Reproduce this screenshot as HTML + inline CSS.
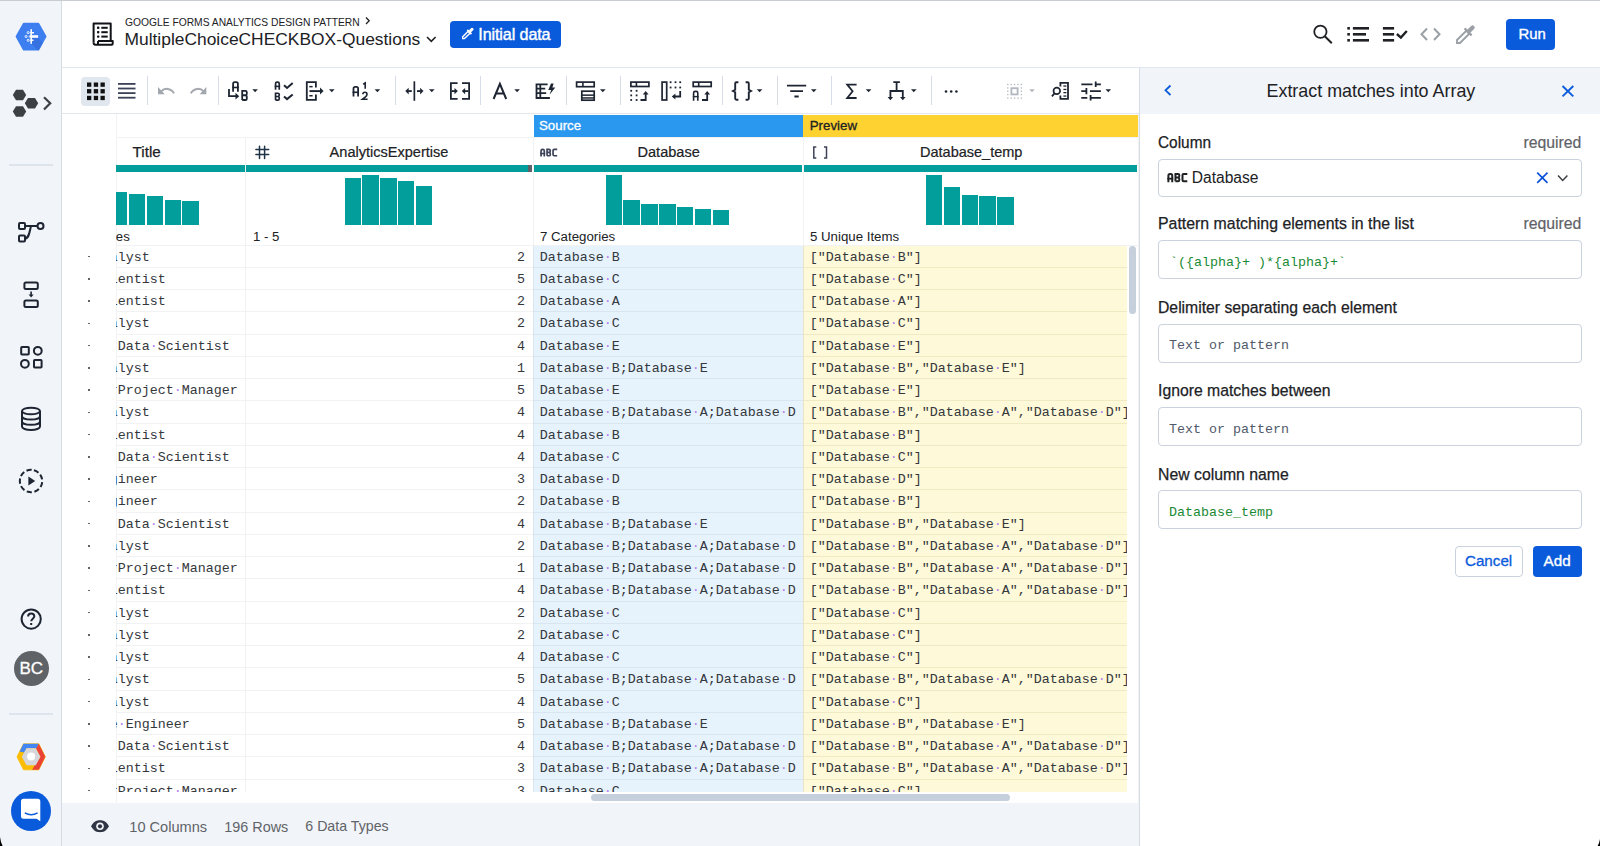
<!DOCTYPE html>
<html><head><meta charset="utf-8">
<style>
*{box-sizing:border-box;margin:0;padding:0}
html,body{width:1600px;height:846px;overflow:hidden;background:#fff;font-family:"Liberation Sans",sans-serif;color:#202124;position:relative}
.abs{position:absolute}
.t{position:absolute;white-space:pre}
svg.ov{position:absolute;left:0;top:0;width:1600px;height:846px;overflow:visible;z-index:20}
.row{position:absolute;left:0;width:1077px;height:22.25px}
.row>div{position:absolute;top:0;height:22.25px;overflow:hidden;white-space:pre;font-family:"Liberation Mono",monospace;font-size:13.33px;line-height:23.7px;color:#34373c}
.row .rn{left:0;width:54px}
b.dot{position:absolute;left:26.3px;top:10.4px;width:1.6px;height:1.6px;background:#5f6368}
.row .c1{left:54px;width:129px;border-bottom:1px solid #f0f2f4}
.row .c2{left:183px;width:288px;text-align:right;padding-right:8px;border-bottom:1px solid #f0f2f4;border-left:1px solid #f0f2f4}
.row .c3{left:471px;width:270px;background:#e6f3fd;padding-left:5.8px;border-bottom:1px solid #d9e6f0;border-left:1px solid #d9e6f0}
.row .c4{left:741px;width:324px;background:#fef9d8;padding-left:5.8px;border-bottom:1px solid #efe9c4;border-left:1px solid #e8e4c8}
.ttl{position:absolute;left:-6.3px;top:0}
i.dt{font-style:normal;color:#b27af0}
.hist{position:absolute;background:#019e9c}
.inp{position:absolute;left:1158px;width:424px;height:39px;border:1px solid #c9d2dd;border-radius:4px;background:#fff}
</style></head><body>

<!-- ============ BACKGROUND BLOCKS ============ -->
<div class="abs" style="left:0;top:0;width:62px;height:846px;background:#f1f4f9"></div>
<div class="abs" style="left:61px;top:0;width:1px;height:846px;background:#d5dce6"></div>
<div class="abs" style="left:62px;top:67px;width:1538px;height:1px;background:#e3e8ee"></div>
<div class="abs" style="left:62px;top:113px;width:1077px;height:1px;background:#e3e8ee"></div>
<div class="abs" style="left:1140px;top:68px;width:460px;height:46px;background:#f1f4f9"></div>
<div class="abs" style="left:1139px;top:68px;width:1px;height:778px;background:#d5dce6"></div>
<div class="abs" style="left:62px;top:803px;width:1077px;height:43px;background:#f1f4f9"></div>
<div class="abs" style="left:0;top:0;width:1600px;height:1px;background:#c9ccd1"></div>

<!-- ============ HEADER TEXT ============ -->
<div class="t" style="left:124.50px;top:14.92px;font-family:'Liberation Sans',sans-serif;font-size:11.2px;line-height:14.0px;color:#202124;transform:scaleX(0.9185);transform-origin:0 0;">GOOGLE FORMS ANALYTICS DESIGN PATTERN</div>
<div class="t" style="left:124.50px;top:29.40px;font-family:'Liberation Sans',sans-serif;font-size:17.4px;line-height:21.75px;color:#202124;">MultipleChoiceCHECKBOX-Questions</div>
<div class="abs" style="left:450px;top:21px;width:111px;height:26.5px;background:#0a5bdb;border-radius:4px"></div>
<div class="t" style="left:478.30px;top:24.16px;font-family:'Liberation Sans',sans-serif;font-size:16.1px;line-height:20.12px;color:#fff;-webkit-text-stroke:0.4px #fff;letter-spacing:-0.1px;">Initial data</div>
<div class="abs" style="left:1506px;top:19.3px;width:49.2px;height:30.5px;background:#0a5bdb;border-radius:4px"></div>
<div class="t" style="left:1518.50px;top:25.13px;font-family:'Liberation Sans',sans-serif;font-size:14.9px;line-height:18.62px;color:#fff;-webkit-text-stroke:0.35px #fff;">Run</div>

<!-- ============ TOOLBAR ============ -->
<div class="abs" style="left:81px;top:77px;width:29px;height:29px;border-radius:4px;background:#e1e7ef"></div>
<div class="abs" style="left:147px;top:76px;width:1px;height:29px;background:#d6dde6"></div>
<div class="abs" style="left:218px;top:76px;width:1px;height:29px;background:#d6dde6"></div>
<div class="abs" style="left:395px;top:76px;width:1px;height:29px;background:#d6dde6"></div>
<div class="abs" style="left:480px;top:76px;width:1px;height:29px;background:#d6dde6"></div>
<div class="abs" style="left:566px;top:76px;width:1px;height:29px;background:#d6dde6"></div>
<div class="abs" style="left:620px;top:76px;width:1px;height:29px;background:#d6dde6"></div>
<div class="abs" style="left:722px;top:76px;width:1px;height:29px;background:#d6dde6"></div>
<div class="abs" style="left:777px;top:76px;width:1px;height:29px;background:#d6dde6"></div>
<div class="abs" style="left:831px;top:76px;width:1px;height:29px;background:#d6dde6"></div>
<div class="abs" style="left:931px;top:76px;width:1px;height:29px;background:#d6dde6"></div>

<!-- ============ GRID ============ -->
<div class="abs" style="left:116px;top:114px;width:1px;height:689px;background:#f0f2f4"></div>
<div class="abs" style="left:116px;top:137px;width:1023px;height:1px;background:#f0f2f4"></div>
<div class="abs" style="left:533.5px;top:115px;width:269.5px;height:21.5px;background:#2b98f0"></div>
<div class="t" style="left:539.00px;top:118.08px;font-family:'Liberation Sans',sans-serif;font-size:13.3px;line-height:16.62px;color:#fff;-webkit-text-stroke:0.3px #fff;">Source</div>
<div class="abs" style="left:803px;top:115px;width:334.5px;height:21.5px;background:#fdd231"></div>
<div class="t" style="left:809.70px;top:118.08px;font-family:'Liberation Sans',sans-serif;font-size:13.3px;line-height:16.62px;color:#202124;-webkit-text-stroke:0.3px #202124;">Preview</div>
<div class="abs" style="left:245px;top:138px;width:1px;height:654px;background:#f0f2f4"></div>
<div class="abs" style="left:533px;top:138px;width:1px;height:654px;background:#f0f2f4"></div>
<div class="abs" style="left:803px;top:138px;width:1px;height:654px;background:#f0f2f4"></div>
<div class="t" style="left:132.60px;top:142.23px;font-family:'Liberation Sans',sans-serif;font-size:15.2px;line-height:19.0px;color:#202124;-webkit-text-stroke:0.25px #202124;">Title</div>
<div class="t" style="left:329.60px;top:142.86px;font-family:'Liberation Sans',sans-serif;font-size:14.55px;line-height:18.19px;color:#202124;-webkit-text-stroke:0.2px #202124;">AnalyticsExpertise</div>
<div class="t" style="left:637.50px;top:142.86px;font-family:'Liberation Sans',sans-serif;font-size:14.55px;line-height:18.19px;color:#202124;-webkit-text-stroke:0.2px #202124;">Database</div>
<div class="t" style="left:920.00px;top:142.92px;font-family:'Liberation Sans',sans-serif;font-size:14.5px;line-height:18.12px;color:#202124;-webkit-text-stroke:0.2px #202124;">Database_temp</div>
<div class="hist" style="left:116px;top:165px;width:128.5px;height:7px"></div>
<div class="hist" style="left:246px;top:165px;width:282px;height:7px"></div>
<div class="abs" style="left:528px;top:165px;width:4px;height:7px;background:#5f6368"></div>
<div class="hist" style="left:533.5px;top:165px;width:268.5px;height:7px"></div>
<div class="hist" style="left:804px;top:165px;width:332.5px;height:7px"></div>
<div class="abs" style="left:116px;top:114px;width:129px;height:131px;overflow:hidden"><div style="position:absolute;left:-116px;top:-114px;width:400px;height:300px"><div class="hist" style="left:111.00px;top:192.00px;width:16.4px;height:33.30px"></div><div class="hist" style="left:128.85px;top:193.60px;width:16.4px;height:31.70px"></div><div class="hist" style="left:146.70px;top:195.70px;width:16.4px;height:29.60px"></div><div class="hist" style="left:164.55px;top:200.00px;width:16.4px;height:25.30px"></div><div class="hist" style="left:182.40px;top:201.20px;width:16.4px;height:24.10px"></div></div></div><div class="hist" style="left:344.50px;top:178.00px;width:16.4px;height:47.30px"></div><div class="hist" style="left:362.35px;top:174.80px;width:16.4px;height:50.50px"></div><div class="hist" style="left:380.20px;top:178.00px;width:16.4px;height:47.30px"></div><div class="hist" style="left:398.05px;top:181.40px;width:16.4px;height:43.90px"></div><div class="hist" style="left:415.90px;top:185.70px;width:16.4px;height:39.60px"></div><div class="hist" style="left:605.60px;top:174.80px;width:16.4px;height:50.50px"></div><div class="hist" style="left:623.45px;top:200.00px;width:16.4px;height:25.30px"></div><div class="hist" style="left:641.30px;top:203.50px;width:16.4px;height:21.80px"></div><div class="hist" style="left:659.15px;top:203.50px;width:16.4px;height:21.80px"></div><div class="hist" style="left:677.00px;top:207.00px;width:16.4px;height:18.30px"></div><div class="hist" style="left:694.85px;top:209.00px;width:16.4px;height:16.30px"></div><div class="hist" style="left:712.70px;top:210.00px;width:16.4px;height:15.30px"></div><div class="hist" style="left:925.80px;top:175.00px;width:16.4px;height:50.30px"></div><div class="hist" style="left:943.65px;top:186.80px;width:16.4px;height:38.50px"></div><div class="hist" style="left:961.50px;top:194.60px;width:16.4px;height:30.70px"></div><div class="hist" style="left:979.35px;top:195.70px;width:16.4px;height:29.60px"></div><div class="hist" style="left:997.20px;top:196.70px;width:16.4px;height:28.60px"></div>
<div class="abs" style="left:116px;top:225px;width:129px;height:20px;overflow:hidden"><div style="position:absolute;left:-116px;top:-225px"><div class="t" style="left:115.80px;top:228.98px;font-family:'Liberation Sans',sans-serif;font-size:13.2px;line-height:16.5px;color:#202124;">es</div></div></div>
<div class="t" style="left:253.00px;top:228.98px;font-family:'Liberation Sans',sans-serif;font-size:13.2px;line-height:16.5px;color:#202124;">1 - 5</div>
<div class="t" style="left:540.00px;top:228.93px;font-family:'Liberation Sans',sans-serif;font-size:13.25px;line-height:16.56px;color:#202124;">7 Categories</div>
<div class="t" style="left:810.00px;top:228.93px;font-family:'Liberation Sans',sans-serif;font-size:13.25px;line-height:16.56px;color:#202124;">5 Unique Items</div>
<div class="abs" style="left:116px;top:245px;width:1023px;height:1px;background:#f0f2f4"></div>
<div class="abs" style="left:62px;top:245.5px;width:1077px;height:546.5px;overflow:hidden">
<div class="row" style="top:0.00px"><div class="rn"><b class="dot"></b></div><div class="c1"><span class="ttl">alyst</span></div><div class="c2">2</div><div class="c3">Database<i class="dt">·</i>B</div><div class="c4">[&quot;Database<i class="dt">·</i>B&quot;]</div></div>
<div class="row" style="top:22.25px"><div class="rn"><b class="dot"></b></div><div class="c1"><span class="ttl">ientist</span></div><div class="c2">5</div><div class="c3">Database<i class="dt">·</i>C</div><div class="c4">[&quot;Database<i class="dt">·</i>C&quot;]</div></div>
<div class="row" style="top:44.50px"><div class="rn"><b class="dot"></b></div><div class="c1"><span class="ttl">ientist</span></div><div class="c2">2</div><div class="c3">Database<i class="dt">·</i>A</div><div class="c4">[&quot;Database<i class="dt">·</i>A&quot;]</div></div>
<div class="row" style="top:66.75px"><div class="rn"><b class="dot"></b></div><div class="c1"><span class="ttl">alyst</span></div><div class="c2">2</div><div class="c3">Database<i class="dt">·</i>C</div><div class="c4">[&quot;Database<i class="dt">·</i>C&quot;]</div></div>
<div class="row" style="top:89.00px"><div class="rn"><b class="dot"></b></div><div class="c1"><span class="ttl"><i class="dt">·</i>Data<i class="dt">·</i>Scientist</span></div><div class="c2">4</div><div class="c3">Database<i class="dt">·</i>E</div><div class="c4">[&quot;Database<i class="dt">·</i>E&quot;]</div></div>
<div class="row" style="top:111.25px"><div class="rn"><b class="dot"></b></div><div class="c1"><span class="ttl">alyst</span></div><div class="c2">1</div><div class="c3">Database<i class="dt">·</i>B;Database<i class="dt">·</i>E</div><div class="c4">[&quot;Database<i class="dt">·</i>B&quot;,&quot;Database<i class="dt">·</i>E&quot;]</div></div>
<div class="row" style="top:133.50px"><div class="rn"><b class="dot"></b></div><div class="c1"><span class="ttl">rProject<i class="dt">·</i>Manager</span></div><div class="c2">5</div><div class="c3">Database<i class="dt">·</i>E</div><div class="c4">[&quot;Database<i class="dt">·</i>E&quot;]</div></div>
<div class="row" style="top:155.75px"><div class="rn"><b class="dot"></b></div><div class="c1"><span class="ttl">alyst</span></div><div class="c2">4</div><div class="c3">Database<i class="dt">·</i>B;Database<i class="dt">·</i>A;Database<i class="dt">·</i>D</div><div class="c4">[&quot;Database<i class="dt">·</i>B&quot;,&quot;Database<i class="dt">·</i>A&quot;,&quot;Database<i class="dt">·</i>D&quot;]</div></div>
<div class="row" style="top:178.00px"><div class="rn"><b class="dot"></b></div><div class="c1"><span class="ttl">ientist</span></div><div class="c2">4</div><div class="c3">Database<i class="dt">·</i>B</div><div class="c4">[&quot;Database<i class="dt">·</i>B&quot;]</div></div>
<div class="row" style="top:200.25px"><div class="rn"><b class="dot"></b></div><div class="c1"><span class="ttl"><i class="dt">·</i>Data<i class="dt">·</i>Scientist</span></div><div class="c2">4</div><div class="c3">Database<i class="dt">·</i>C</div><div class="c4">[&quot;Database<i class="dt">·</i>C&quot;]</div></div>
<div class="row" style="top:222.50px"><div class="rn"><b class="dot"></b></div><div class="c1"><span class="ttl">gineer</span></div><div class="c2">3</div><div class="c3">Database<i class="dt">·</i>D</div><div class="c4">[&quot;Database<i class="dt">·</i>D&quot;]</div></div>
<div class="row" style="top:244.75px"><div class="rn"><b class="dot"></b></div><div class="c1"><span class="ttl">gineer</span></div><div class="c2">2</div><div class="c3">Database<i class="dt">·</i>B</div><div class="c4">[&quot;Database<i class="dt">·</i>B&quot;]</div></div>
<div class="row" style="top:267.00px"><div class="rn"><b class="dot"></b></div><div class="c1"><span class="ttl"><i class="dt">·</i>Data<i class="dt">·</i>Scientist</span></div><div class="c2">4</div><div class="c3">Database<i class="dt">·</i>B;Database<i class="dt">·</i>E</div><div class="c4">[&quot;Database<i class="dt">·</i>B&quot;,&quot;Database<i class="dt">·</i>E&quot;]</div></div>
<div class="row" style="top:289.25px"><div class="rn"><b class="dot"></b></div><div class="c1"><span class="ttl">alyst</span></div><div class="c2">2</div><div class="c3">Database<i class="dt">·</i>B;Database<i class="dt">·</i>A;Database<i class="dt">·</i>D</div><div class="c4">[&quot;Database<i class="dt">·</i>B&quot;,&quot;Database<i class="dt">·</i>A&quot;,&quot;Database<i class="dt">·</i>D&quot;]</div></div>
<div class="row" style="top:311.50px"><div class="rn"><b class="dot"></b></div><div class="c1"><span class="ttl">rProject<i class="dt">·</i>Manager</span></div><div class="c2">1</div><div class="c3">Database<i class="dt">·</i>B;Database<i class="dt">·</i>A;Database<i class="dt">·</i>D</div><div class="c4">[&quot;Database<i class="dt">·</i>B&quot;,&quot;Database<i class="dt">·</i>A&quot;,&quot;Database<i class="dt">·</i>D&quot;]</div></div>
<div class="row" style="top:333.75px"><div class="rn"><b class="dot"></b></div><div class="c1"><span class="ttl">ientist</span></div><div class="c2">4</div><div class="c3">Database<i class="dt">·</i>B;Database<i class="dt">·</i>A;Database<i class="dt">·</i>D</div><div class="c4">[&quot;Database<i class="dt">·</i>B&quot;,&quot;Database<i class="dt">·</i>A&quot;,&quot;Database<i class="dt">·</i>D&quot;]</div></div>
<div class="row" style="top:356.00px"><div class="rn"><b class="dot"></b></div><div class="c1"><span class="ttl">alyst</span></div><div class="c2">2</div><div class="c3">Database<i class="dt">·</i>C</div><div class="c4">[&quot;Database<i class="dt">·</i>C&quot;]</div></div>
<div class="row" style="top:378.25px"><div class="rn"><b class="dot"></b></div><div class="c1"><span class="ttl">alyst</span></div><div class="c2">2</div><div class="c3">Database<i class="dt">·</i>C</div><div class="c4">[&quot;Database<i class="dt">·</i>C&quot;]</div></div>
<div class="row" style="top:400.50px"><div class="rn"><b class="dot"></b></div><div class="c1"><span class="ttl">alyst</span></div><div class="c2">4</div><div class="c3">Database<i class="dt">·</i>C</div><div class="c4">[&quot;Database<i class="dt">·</i>C&quot;]</div></div>
<div class="row" style="top:422.75px"><div class="rn"><b class="dot"></b></div><div class="c1"><span class="ttl">alyst</span></div><div class="c2">5</div><div class="c3">Database<i class="dt">·</i>B;Database<i class="dt">·</i>A;Database<i class="dt">·</i>D</div><div class="c4">[&quot;Database<i class="dt">·</i>B&quot;,&quot;Database<i class="dt">·</i>A&quot;,&quot;Database<i class="dt">·</i>D&quot;]</div></div>
<div class="row" style="top:445.00px"><div class="rn"><b class="dot"></b></div><div class="c1"><span class="ttl">alyst</span></div><div class="c2">4</div><div class="c3">Database<i class="dt">·</i>C</div><div class="c4">[&quot;Database<i class="dt">·</i>C&quot;]</div></div>
<div class="row" style="top:467.25px"><div class="rn"><b class="dot"></b></div><div class="c1"><span class="ttl">e<i class="dt">·</i>Engineer</span></div><div class="c2">5</div><div class="c3">Database<i class="dt">·</i>B;Database<i class="dt">·</i>E</div><div class="c4">[&quot;Database<i class="dt">·</i>B&quot;,&quot;Database<i class="dt">·</i>E&quot;]</div></div>
<div class="row" style="top:489.50px"><div class="rn"><b class="dot"></b></div><div class="c1"><span class="ttl"><i class="dt">·</i>Data<i class="dt">·</i>Scientist</span></div><div class="c2">4</div><div class="c3">Database<i class="dt">·</i>B;Database<i class="dt">·</i>A;Database<i class="dt">·</i>D</div><div class="c4">[&quot;Database<i class="dt">·</i>B&quot;,&quot;Database<i class="dt">·</i>A&quot;,&quot;Database<i class="dt">·</i>D&quot;]</div></div>
<div class="row" style="top:511.75px"><div class="rn"><b class="dot"></b></div><div class="c1"><span class="ttl">ientist</span></div><div class="c2">3</div><div class="c3">Database<i class="dt">·</i>B;Database<i class="dt">·</i>A;Database<i class="dt">·</i>D</div><div class="c4">[&quot;Database<i class="dt">·</i>B&quot;,&quot;Database<i class="dt">·</i>A&quot;,&quot;Database<i class="dt">·</i>D&quot;]</div></div>
<div class="row" style="top:534.00px"><div class="rn"><b class="dot"></b></div><div class="c1"><span class="ttl">rProject<i class="dt">·</i>Manager</span></div><div class="c2">3</div><div class="c3">Database<i class="dt">·</i>C</div><div class="c4">[&quot;Database<i class="dt">·</i>C&quot;]</div></div>
</div>
<div class="abs" style="left:1128.8px;top:245.7px;width:7.7px;height:68.7px;border-radius:4px;background:#c5d0dc"></div>
<div class="abs" style="left:591px;top:794.2px;width:418.8px;height:7.3px;border-radius:4px;background:#c5d0dc"></div>
<div class="abs" style="left:1137.5px;top:114px;width:1px;height:689px;background:#f0f2f4"></div>

<!-- ============ FOOTER ============ -->
<div class="t" style="left:129.30px;top:817.72px;font-family:'Liberation Sans',sans-serif;font-size:14.6px;line-height:18.25px;color:#5f6368;">10 Columns</div>
<div class="t" style="left:224.30px;top:817.91px;font-family:'Liberation Sans',sans-serif;font-size:14.4px;line-height:18.0px;color:#5f6368;">196 Rows</div>
<div class="t" style="left:305.30px;top:818.10px;font-family:'Liberation Sans',sans-serif;font-size:14.2px;line-height:17.75px;color:#5f6368;">6 Data Types</div>

<!-- ============ SIDEBAR TEXT ============ -->
<div class="abs" style="left:9px;top:164px;width:44px;height:2px;background:#dde4ec"></div>
<div class="abs" style="left:13.6px;top:650.8px;width:35.4px;height:35.4px;border-radius:50%;background:#5f6368"></div>
<div class="t" style="left:-268.70px;width:600px;text-align:center;top:658.48px;font-family:'Liberation Sans',sans-serif;font-size:17px;line-height:21.25px;color:#fff;-webkit-text-stroke:0.3px #fff;">BC</div>
<div class="abs" style="left:9px;top:713px;width:44px;height:2px;background:#dde4ec"></div>
<div class="abs" style="left:11.2px;top:790.6px;width:40px;height:40px;border-radius:50%;background:#0a5bdb"></div>

<!-- ============ PANEL ============ -->
<div class="t" style="left:1266.50px;top:79.81px;font-family:'Liberation Sans',sans-serif;font-size:17.9px;line-height:22.38px;color:#202124;">Extract matches into Array</div>
<div class="t" style="left:1158.30px;top:132.36px;font-family:'Liberation Sans',sans-serif;font-size:16.3px;line-height:20.38px;color:#202124;-webkit-text-stroke:0.25px #202124;transform:scaleX(0.945);transform-origin:0 0;">Column</div>
<div class="t" style="right:18.60px;top:133.05px;font-family:'Liberation Sans',sans-serif;font-size:15.8px;line-height:19.75px;color:#5f6368;-webkit-text-stroke:0.2px #5f6368;">required</div>
<div class="inp" style="top:159.3px;height:37.5px"></div>
<div class="t" style="left:1191.75px;top:168.34px;font-family:'Liberation Sans',sans-serif;font-size:15.6px;line-height:19.5px;color:#202124;">Database</div>
<div class="t" style="left:1158.20px;top:213.16px;font-family:'Liberation Sans',sans-serif;font-size:16.3px;line-height:20.38px;color:#202124;-webkit-text-stroke:0.25px #202124;transform:scaleX(0.975);transform-origin:0 0;">Pattern matching elements in the list</div>
<div class="t" style="right:18.60px;top:213.65px;font-family:'Liberation Sans',sans-serif;font-size:15.8px;line-height:19.75px;color:#5f6368;-webkit-text-stroke:0.2px #5f6368;">required</div>
<div class="inp" style="top:240.2px"></div>
<div class="t" style="left:1170.00px;top:254.82px;font-family:'Liberation Mono',monospace;font-size:13.33px;line-height:16.66px;color:#1a8a35;">`({alpha}+ )*{alpha}+`</div>
<div class="t" style="left:1158.00px;top:296.66px;font-family:'Liberation Sans',sans-serif;font-size:16.3px;line-height:20.38px;color:#202124;-webkit-text-stroke:0.25px #202124;transform:scaleX(0.967);transform-origin:0 0;">Delimiter separating each element</div>
<div class="inp" style="top:323.7px"></div>
<div class="t" style="left:1169.00px;top:337.92px;font-family:'Liberation Mono',monospace;font-size:13.33px;line-height:16.66px;color:#4f5a6a;">Text or pattern</div>
<div class="t" style="left:1158.00px;top:380.16px;font-family:'Liberation Sans',sans-serif;font-size:16.3px;line-height:20.38px;color:#202124;-webkit-text-stroke:0.25px #202124;transform:scaleX(0.968);transform-origin:0 0;">Ignore matches between</div>
<div class="inp" style="top:407.2px"></div>
<div class="t" style="left:1169.00px;top:421.92px;font-family:'Liberation Mono',monospace;font-size:13.33px;line-height:16.66px;color:#4f5a6a;">Text or pattern</div>
<div class="t" style="left:1158.00px;top:463.66px;font-family:'Liberation Sans',sans-serif;font-size:16.3px;line-height:20.38px;color:#202124;-webkit-text-stroke:0.25px #202124;transform:scaleX(0.97);transform-origin:0 0;">New column name</div>
<div class="inp" style="top:490.2px"></div>
<div class="t" style="left:1169.00px;top:504.82px;font-family:'Liberation Mono',monospace;font-size:13.33px;line-height:16.66px;color:#1a8a35;">Database_temp</div>
<div class="abs" style="left:1454.6px;top:546px;width:68px;height:30.5px;border:1px solid #c9d2dd;border-radius:4px;background:#fff"></div>
<div class="t" style="left:1188.60px;width:600px;text-align:center;top:551.23px;font-family:'Liberation Sans',sans-serif;font-size:15.2px;line-height:19.0px;color:#0a5bdb;-webkit-text-stroke:0.3px #0a5bdb;">Cancel</div>
<div class="abs" style="left:1532.5px;top:546px;width:49.2px;height:30.5px;border-radius:4px;background:#0a5bdb"></div>
<div class="t" style="left:1257.10px;width:600px;text-align:center;top:551.23px;font-family:'Liberation Sans',sans-serif;font-size:15.2px;line-height:19.0px;color:#fff;-webkit-text-stroke:0.35px #fff;">Add</div>

<!-- ============ ICON OVERLAY ============ -->
<svg class="ov" viewBox="0 0 1600 846">
<!-- sidebar logo -->
<polygon points="16.6,36.6 23.8,23.8 38.3,23.8 45.5,36.6 38.3,49.4 23.8,49.4" fill="#3d7ff0" stroke="#3d7ff0" stroke-width="2" stroke-linejoin="round"/>
<polygon points="38,37.8 43,42.8 39.3,49.4 38.2,50.4 31.5,43.7 31.8,37.8" fill="#2f62cf" opacity="0.45"/>
<g fill="#fff">
<rect x="30.4" y="29.2" width="1.6" height="14.6"/>
<rect x="30.4" y="35.2" width="7.7" height="2.6"/>
<rect x="30.4" y="32" width="3.6" height="1.5"/>
<rect x="30.4" y="39.5" width="3.1" height="1.5"/>
</g>
<g fill="none" stroke="#fff" stroke-width="0.9">
<circle cx="28.2" cy="32.6" r="1.05"/><circle cx="26.1" cy="36.5" r="1.05"/><circle cx="28.2" cy="40.3" r="1.05"/><circle cx="30" cy="36.5" r="0.8"/>
</g>
<!-- hex cluster -->
<g fill="#3c4043">
<polygon points="12.8,95 16,89.7 23,89.7 26.2,95 23,100.3 16,100.3"/>
<polygon points="12.8,111.5 16,106.2 23,106.2 26.2,111.5 23,116.8 16,116.8"/>
<polygon points="24.8,103.3 28,98 35,98 38.2,103.3 35,108.6 28,108.6"/>
</g>
<polyline points="44,97.3 50.2,103.3 44,109.6" fill="none" stroke="#3c4043" stroke-width="2.2"/>
<!-- flow icon -->
<g fill="none" stroke="#1e2532" stroke-width="2" transform="translate(16,220)">
<rect x="3" y="3" width="6" height="6" rx="1"/><rect x="3" y="15.5" width="6" height="6" rx="1"/>
<circle cx="24.5" cy="6" r="3"/><path d="M9 6 H21.5"/><path d="M9 18.5 C13 18.5 13.5 12 15 6"/>
</g>
<!-- recipe -->
<g transform="translate(21,279)">
<g fill="none" stroke="#1e2532" stroke-width="2"><rect x="3.4" y="3.5" width="13.4" height="6.5" rx="1.5"/><rect x="3.4" y="21.4" width="13.4" height="6.5" rx="1.5"/></g>
<path d="M10.1 12.5 V16.5" stroke="#1e2532" stroke-width="1.6"/><polygon points="7.6,15.6 12.6,15.6 10.1,18.6" fill="#1e2532"/>
</g>
<!-- shapes -->
<g fill="none" stroke="#1e2532" stroke-width="2" transform="translate(18,344)">
<rect x="3.2" y="3" width="7.6" height="7.6" rx="0.8"/><circle cx="19.8" cy="6.8" r="3.9"/><circle cx="6.9" cy="19.8" r="3.9"/><rect x="16" y="16" width="7.6" height="7.6" rx="0.8"/>
</g>
<!-- database -->
<g fill="none" stroke="#1e2532" stroke-width="2" transform="translate(19,405)">
<ellipse cx="12" cy="6" rx="9" ry="3.3"/>
<path d="M3 6 V21.5 C3 23.5 7 25 12 25 C17 25 21 23.5 21 21.5 V6"/>
<path d="M3 11.3 C3 13.3 7 14.6 12 14.6 C17 14.6 21 13.3 21 11.3"/>
<path d="M3 16.5 C3 18.5 7 19.8 12 19.8 C17 19.8 21 18.5 21 16.5"/>
</g>
<!-- dashed play -->
<g transform="translate(17,467)">
<circle cx="14" cy="14" r="11.2" fill="none" stroke="#1e2532" stroke-width="2" stroke-dasharray="5.2 2.6" transform="rotate(-75 14 14)"/>
<polygon points="11.4,9.6 11.4,18.4 18.2,14" fill="#1e2532"/>
</g>
<!-- help -->
<g transform="translate(18,606)">
<circle cx="13.2" cy="13.1" r="9.6" fill="none" stroke="#1e2532" stroke-width="2"/>
<path d="M10.1 10.6 C10.1 8.6 11.5 7.4 13.2 7.4 C15 7.4 16.3 8.6 16.3 10.3 C16.3 12.6 13.2 12.8 13.2 15.3" fill="none" stroke="#1e2532" stroke-width="2"/>
<rect x="12.2" y="17" width="2" height="2" fill="#1e2532"/>
</g>
<!-- gcp -->
<polygon points="17,756.8 23.5,743.8 38.8,743.8 45.3,756.8 38.8,769.8 23.5,769.8" fill="#fbbc04" stroke="#fbbc04" stroke-width="0.8" stroke-linejoin="round"/>
<polygon points="19.6,751.6 23.5,743.8 38.8,743.8 36.5,748.3 26.5,748.3 24.2,752.6" fill="#4285f4"/>
<polygon points="38.8,743.8 45.3,756.8 38.8,769.8 32.2,769.8 34.8,765.3 40.3,756.8 35.8,748.3 36.5,748.3" fill="#ea4335"/>
<polygon points="21.8,756.8 26.5,748.3 35.8,748.3 40.4,756.8 35.8,765.3 26.5,765.3" fill="#d5d7da"/>
<circle cx="31.1" cy="756.6" r="4" fill="#fff"/>
<!-- chat -->
<g transform="translate(11.2,790.6)">
<path d="M9.8 10.7 Q9.8 8.2 12.3 8.2 H26.6 Q29.1 8.2 29.1 10.7 V30.7 L25.4 28.2 H12.3 Q9.8 28.2 9.8 25.7 Z" fill="#fff"/>
<path d="M13.6 22.3 Q20 26 26.4 22.3" fill="none" stroke="#0a5bdb" stroke-width="1.3"/>
</g>

<!-- header doc icon -->
<g fill="none" stroke="#111318" stroke-width="2" stroke-linejoin="round">
<path d="M93.6 42.7 V23.4 H110.7 V41.1"/>
<path d="M98 41.1 H112.7 V43.7 Q112.7 44.7 111.7 44.7 H95.6 Q93.6 44.7 93.6 42.7 M98 41.1 V44.7"/>
</g>
<g fill="#111318">
<rect x="97" y="26.6" width="2.4" height="2.4" rx="0.8"/><rect x="101.3" y="26.8" width="6.4" height="2"/>
<rect x="97" y="31" width="2.4" height="2.4" rx="0.8"/><rect x="101.3" y="31.2" width="6.4" height="2"/>
<rect x="97" y="35.4" width="2.4" height="2.4" rx="0.8"/><rect x="101.3" y="35.6" width="6.4" height="2"/>
</g>
<polyline points="366,17.5 369.2,20.8 366,24" fill="none" stroke="#202124" stroke-width="1.3"/>
<polyline points="427,37 431.3,41.3 435.6,37" fill="none" stroke="#202124" stroke-width="1.6"/>
<!-- pen in button -->
<g transform="translate(460.3,26.6) scale(0.6)">
<path d="M4 20 L4 17 L13.5 7.5 L16.5 10.5 L7 20 Z" fill="none" stroke="#fff" stroke-width="2.4"/>
<path d="M11.6 5.4 L18.6 12.4" stroke="#fff" stroke-width="3"/>
<path d="M15.5 8.5 L19.6 4.4" stroke="#fff" stroke-width="5" stroke-linecap="round"/>
</g>
<!-- header right icons -->
<circle cx="1320.4" cy="31.7" r="6.15" fill="none" stroke="#202124" stroke-width="1.8"/>
<path d="M1324.8 36.2 L1331.8 43.2" stroke="#202124" stroke-width="2"/>
<g fill="#202124">
<rect x="1347.3" y="27" width="2.6" height="2.6"/><rect x="1352.9" y="27" width="16.1" height="2.6"/>
<rect x="1347.3" y="33" width="2.6" height="2.6"/><rect x="1352.9" y="33" width="13.1" height="2.6"/>
<rect x="1347.3" y="39" width="2.6" height="2.6"/><rect x="1352.9" y="39" width="16.1" height="2.6"/>
<rect x="1382.9" y="27" width="11.2" height="2.6"/><rect x="1382.9" y="33" width="11.2" height="2.6"/><rect x="1382.9" y="39" width="11.2" height="2.6"/>
</g>
<polyline points="1396.9,34 1400.9,37.6 1406.8,31" fill="none" stroke="#202124" stroke-width="2.4"/>
<polyline points="1427,28.5 1421.5,34.3 1427,40" fill="none" stroke="#9aa0a6" stroke-width="2"/>
<polyline points="1434,28.5 1439.5,34.3 1434,40" fill="none" stroke="#9aa0a6" stroke-width="2"/>
<g transform="translate(1453,23)">
<path d="M4 20 L4 17 L13.5 7.5 L16.5 10.5 L7 20 Z" fill="none" stroke="#9aa0a6" stroke-width="1.9"/>
<path d="M11.6 5.4 L18.6 12.4" stroke="#9aa0a6" stroke-width="2.2"/>
<path d="M15.5 8.5 L19.6 4.4" stroke="#9aa0a6" stroke-width="4.2" stroke-linecap="round"/>
</g>

<!-- toolbar: grid -->
<g fill="#111">
<rect x="87" y="82.5" width="4.3" height="4.3"/><rect x="93.8" y="82.5" width="4.3" height="4.3"/><rect x="100.5" y="82.5" width="4.3" height="4.3"/>
<rect x="87" y="89.1" width="4.3" height="4.3"/><rect x="93.8" y="89.1" width="4.3" height="4.3"/><rect x="100.5" y="89.1" width="4.3" height="4.3"/>
<rect x="87" y="95.8" width="4.3" height="4.3"/><rect x="93.8" y="95.8" width="4.3" height="4.3"/><rect x="100.5" y="95.8" width="4.3" height="4.3"/>
</g>
<g fill="#3c4358">
<rect x="118" y="83" width="17.5" height="1.8"/><rect x="118" y="87.6" width="17.5" height="1.8"/><rect x="118" y="92.2" width="17.5" height="1.8"/><rect x="118" y="96.8" width="17.5" height="1.8"/>
</g>
<!-- undo/redo -->
<polygon points="158,86.9 158,94.3 164.8,94.3" fill="#a3a8ae"/>
<path d="M161 91.6 C164.5 87.6 171 87.8 174 93.4" fill="none" stroke="#a3a8ae" stroke-width="2"/>
<polygon points="206.4,86.9 206.4,94.3 199.6,94.3" fill="#a3a8ae"/>
<path d="M190.8 93.4 C193.8 87.8 200.3 87.6 203.8 91.6" fill="none" stroke="#a3a8ae" stroke-width="2"/>
<path d="M233.1 91.7 V83.7 Q233.1 82.10000000000001 234.7 82.10000000000001 H236.29999999999998 Q237.89999999999998 82.10000000000001 237.89999999999998 83.7 V91.7" fill="none" stroke="#1e2532" stroke-width="1.8"/><rect x="232.2" y="86.66" width="6.6" height="1.62" fill="#1e2532"/>
<path d="M242.20000000000002 100.0 V90.9 H245.50000000000003 Q246.8 90.9 246.8 92.2 V93.732 Q246.8 95.232 245.50000000000003 95.232 H242.20000000000002 M245.50000000000003 95.232 Q246.8 95.232 246.8 97.032 V98.7 Q246.8 100.0 245.50000000000003 100.0 H242.20000000000002" fill="none" stroke="#1e2532" stroke-width="1.8"/>
<path d="M229 89 V96.2 H236" fill="none" stroke="#1e2532" stroke-width="1.8"/>
<polygon points="235.5,92.8 239.2,96.2 235.5,99.6" fill="#1e2532"/>
<polygon points="252.3,89.3 257.90000000000003,89.3 255.10000000000002,92.2" fill="#1e2532"/>
<path d="M275.55 89.7 V83.64999999999999 Q275.55 82.05 277.15000000000003 82.05 H277.6499999999999 Q279.24999999999994 82.05 279.24999999999994 83.64999999999999 V89.7" fill="none" stroke="#1e2532" stroke-width="1.7"/><rect x="274.7" y="85.62" width="5.4" height="1.53" fill="#1e2532"/>
<path d="M275.55 100.05000000000001 V93.25 H277.9 Q279.24999999999994 93.25 279.24999999999994 94.60000000000001 V94.98 Q279.24999999999994 96.48 277.9 96.48 H275.55 M277.9 96.48 Q279.24999999999994 96.48 279.24999999999994 98.28 V98.7 Q279.24999999999994 100.05000000000001 277.9 100.05000000000001 H275.55" fill="none" stroke="#1e2532" stroke-width="1.7"/>
<polyline points="284,85.205 287.045,88.0 292.7,83.1" fill="none" stroke="#1e2532" stroke-width="2.0"/>
<polyline points="284,96.47 287.045,99.1 292.7,94.5" fill="none" stroke="#1e2532" stroke-width="2.0"/>
<path d="M315.9 87.6 V82.2 H306.8 V99.9 H315.9 V94.6" fill="none" stroke="#1e2532" stroke-width="1.8"/>
<rect x="309.3" y="85.9" width="3.3" height="1.5" fill="#1e2532"/><rect x="309.3" y="95" width="3.3" height="1.5" fill="#1e2532"/>
<path d="M309.5 91.1 H320.5" stroke="#1e2532" stroke-width="1.9"/><polygon points="320.0,87.6 323.6,91.1 320.0,94.6" fill="#1e2532"/>
<polygon points="329.0,89.3 334.6,89.3 331.8,92.2" fill="#1e2532"/>
<path d="M353.5 96.60000000000001 V88.4 Q353.5 86.80000000000001 355.1 86.80000000000001 H356.5 Q358.1 86.80000000000001 358.1 88.4 V96.60000000000001" fill="none" stroke="#1e2532" stroke-width="1.8"/><rect x="352.6" y="91.464" width="6.4" height="1.62" fill="#1e2532"/>
<path d="M363.2 84.2 L365.2 83 V88.7" fill="none" stroke="#1e2532" stroke-width="1.6"/>
<path d="M362.6 94.2 Q363.2 92.3 364.9 92.3 Q367 92.3 367 94.2 Q367 95.6 365.5 96.8 L362.4 99.2 H367.6" fill="none" stroke="#1e2532" stroke-width="1.6"/>
<polygon points="374.6,89.3 380.20000000000005,89.3 377.40000000000003,92.2" fill="#1e2532"/>
<rect x="413.5" y="81.3" width="1.7" height="19.5" fill="#1e2532"/>
<path d="M411.8 91.1 H408.2" stroke="#1e2532" stroke-width="1.9"/><polygon points="408.7,87.8 405.3,91.1 408.7,94.39999999999999" fill="#1e2532"/>
<path d="M417.0 91.1 H420.6" stroke="#1e2532" stroke-width="1.9"/><polygon points="420.1,87.8 423.5,91.1 420.1,94.39999999999999" fill="#1e2532"/>
<polygon points="429.0,89.3 434.6,89.3 431.8,92.2" fill="#1e2532"/>
<path d="M457.6 83.1 H450.9 V98.8 H457.6" fill="none" stroke="#1e2532" stroke-width="1.8"/>
<path d="M462 83.1 H469.1 V98.8 H462" fill="none" stroke="#1e2532" stroke-width="1.8"/>
<path d="M451.5 91.1 H455.0" stroke="#1e2532" stroke-width="1.8"/><polygon points="454.5,87.89999999999999 457.8,91.1 454.5,94.3" fill="#1e2532"/>
<path d="M468.2 91.1 H464.6" stroke="#1e2532" stroke-width="1.8"/><polygon points="465.1,87.89999999999999 461.8,91.1 465.1,94.3" fill="#1e2532"/>
<path d="M493.6 99 L499.9 83.8 L506.2 99 M495.9 93.6 H503.9" fill="none" stroke="#1e2532" stroke-width="2"/>
<polygon points="514.3,89.3 519.9,89.3 517.0999999999999,92.2" fill="#1e2532"/>
<path d="M547.6 84.4 H536.5 V98 H549.9 M540.3 84.4 V98 M536.5 88.7 H545.2 M536.5 93.2 H546.2" fill="none" stroke="#1e2532" stroke-width="1.8"/>
<polygon points="551,83.4 548.3,90 551.2,90 549.5,94.7 555.3,87.5 552.4,87.5 553.6,83.4" fill="#1e2532"/>
<rect x="576.6" y="82.1" width="17.6" height="4.6" fill="none" stroke="#1e2532" stroke-width="1.7"/>
<rect x="582.1" y="82.1" width="1.6" height="4.6" fill="#1e2532"/>
<rect x="581.8" y="91.2" width="12.4" height="9" fill="none" stroke="#1e2532" stroke-width="1.7"/>
<rect x="581.8" y="94.4" width="12.4" height="1.5" fill="#1e2532"/><rect x="581.8" y="97.2" width="12.4" height="1.5" fill="#1e2532"/>
<polygon points="600.0,89.3 605.6,89.3 602.8,92.2" fill="#1e2532"/>
<rect x="630.9" y="82.1" width="18" height="4.4" fill="none" stroke="#1e2532" stroke-width="1.7"/><rect x="635.6" y="82.1" width="1.6" height="4.4" fill="#1e2532"/>
<rect x="630.3000000000001" y="89.89999999999999" width="1.8" height="1.8" fill="#1e2532"/><rect x="630.3000000000001" y="94.5" width="1.8" height="1.8" fill="#1e2532"/><rect x="630.3000000000001" y="99.1" width="1.8" height="1.8" fill="#1e2532"/><rect x="635.7" y="89.89999999999999" width="1.8" height="1.8" fill="#1e2532"/><rect x="635.7" y="94.5" width="1.8" height="1.8" fill="#1e2532"/><rect x="635.7" y="99.1" width="1.8" height="1.8" fill="#1e2532"/>
<path d="M640.5 100 H645.7 V94" fill="none" stroke="#1e2532" stroke-width="1.8"/><polygon points="642.8,94.4 645.7,91 648.6,94.4" fill="#1e2532"/>
<rect x="662.1" y="82.1" width="4.6" height="17.9" fill="none" stroke="#1e2532" stroke-width="1.7"/>
<rect x="669.7" y="81.3" width="1.8" height="1.8" fill="#1e2532"/><rect x="669.7" y="86.6" width="1.8" height="1.8" fill="#1e2532"/><rect x="674.6" y="81.3" width="1.8" height="1.8" fill="#1e2532"/><rect x="674.6" y="86.6" width="1.8" height="1.8" fill="#1e2532"/><rect x="679.3000000000001" y="81.3" width="1.8" height="1.8" fill="#1e2532"/><rect x="679.3000000000001" y="86.6" width="1.8" height="1.8" fill="#1e2532"/>
<path d="M680.2 91 V96.5 H675" fill="none" stroke="#1e2532" stroke-width="1.8"/><polygon points="675.4,93.6 671.8,96.5 675.4,99.4" fill="#1e2532"/>
<rect x="693.2" y="82.1" width="18" height="4.4" fill="none" stroke="#1e2532" stroke-width="1.7"/><rect x="697.9" y="82.1" width="1.6" height="4.4" fill="#1e2532"/>
<path d="M693.5999999999999 100.8 V92.99999999999999 Q693.5999999999999 91.39999999999999 695.1999999999999 91.39999999999999 H696.1999999999999 Q697.8 91.39999999999999 697.8 92.99999999999999 V100.8" fill="none" stroke="#1e2532" stroke-width="1.6"/><rect x="692.8" y="95.904" width="5.8" height="1.4400000000000002" fill="#1e2532"/>
<path d="M702 100 H707.2 V94" fill="none" stroke="#1e2532" stroke-width="1.8"/><polygon points="704.3,94.4 707.2,91 710.1,94.4" fill="#1e2532"/>
<path d="M738.4 82.2 H736.4 Q735.2 82.2 735.2 83.4 V89.8 L733 91 L735.2 92.2 V98.6 Q735.2 99.8 736.4 99.8 H738.4" fill="none" stroke="#1e2532" stroke-width="1.9"/>
<path d="M745.6 82.2 H747.6 Q748.8 82.2 748.8 83.4 V89.8 L751 91 L748.8 92.2 V98.6 Q748.8 99.8 747.6 99.8 H745.6" fill="none" stroke="#1e2532" stroke-width="1.9"/>
<polygon points="756.8,89.3 762.4,89.3 759.5999999999999,92.2" fill="#1e2532"/>
<path d="M787 85.7 H806.2 M790.2 91.1 H803 M794.4 96.5 H798.7" fill="none" stroke="#1e2532" stroke-width="1.8"/>
<polygon points="811.0,89.3 816.6,89.3 813.8,92.2" fill="#1e2532"/>
<path d="M856.6 84.6 H847.2 L852.6 91.3 L847.2 98 H856.6" fill="none" stroke="#1e2532" stroke-width="1.8"/>
<polygon points="865.8,89.3 871.4,89.3 868.5999999999999,92.2" fill="#1e2532"/>
<path d="M893.3 82.2 H899.9 M896.6 82.2 V91 M890.4 99 V91 H902.8 V99" fill="none" stroke="#1e2532" stroke-width="1.8"/>
<polygon points="887.6,97 890.4,100.2 893.2,97" fill="#1e2532"/><polygon points="900,97 902.8,100.2 905.6,97" fill="#1e2532"/>
<polygon points="911.0,89.3 916.6,89.3 913.8,92.2" fill="#1e2532"/>
<circle cx="946" cy="91.5" r="1.3" fill="#1e2532"/><circle cx="951.2" cy="91.5" r="1.3" fill="#1e2532"/><circle cx="956.4" cy="91.5" r="1.3" fill="#1e2532"/>
<rect x="1007.15" y="83.85" width="1.3" height="1.3" fill="#b1b7be"/><rect x="1007.15" y="97.44999999999999" width="1.3" height="1.3" fill="#b1b7be"/><rect x="1010.5500000000001" y="83.85" width="1.3" height="1.3" fill="#b1b7be"/><rect x="1010.5500000000001" y="97.44999999999999" width="1.3" height="1.3" fill="#b1b7be"/><rect x="1013.95" y="83.85" width="1.3" height="1.3" fill="#b1b7be"/><rect x="1013.95" y="97.44999999999999" width="1.3" height="1.3" fill="#b1b7be"/><rect x="1017.35" y="83.85" width="1.3" height="1.3" fill="#b1b7be"/><rect x="1017.35" y="97.44999999999999" width="1.3" height="1.3" fill="#b1b7be"/><rect x="1020.75" y="83.85" width="1.3" height="1.3" fill="#b1b7be"/><rect x="1020.75" y="97.44999999999999" width="1.3" height="1.3" fill="#b1b7be"/>
<rect x="1007.15" y="87.35" width="1.3" height="1.3" fill="#b1b7be"/><rect x="1007.15" y="90.64999999999999" width="1.3" height="1.3" fill="#b1b7be"/><rect x="1007.15" y="93.94999999999999" width="1.3" height="1.3" fill="#b1b7be"/><rect x="1020.75" y="87.35" width="1.3" height="1.3" fill="#b1b7be"/><rect x="1020.75" y="90.64999999999999" width="1.3" height="1.3" fill="#b1b7be"/><rect x="1020.75" y="93.94999999999999" width="1.3" height="1.3" fill="#b1b7be"/>
<rect x="1011.4" y="88.2" width="6.2" height="6.2" fill="none" stroke="#b1b7be" stroke-width="1.8"/>
<polygon points="1029.2,89.3 1034.8,89.3 1032.0,92.2" fill="#b1b7be"/>
<path d="M1060.4 86.5 V82.9 H1068 V98.8 H1060.4 V95.5" fill="none" stroke="#1e2532" stroke-width="1.8"/>
<rect x="1063.4" y="85.4" width="3" height="1.3" fill="#1e2532"/><rect x="1063.4" y="88.8" width="3" height="1.3" fill="#1e2532"/><rect x="1063.4" y="92" width="3" height="1.3" fill="#1e2532"/><rect x="1063.4" y="95.4" width="3" height="1.3" fill="#1e2532"/>
<circle cx="1056.8" cy="90.9" r="3.3" fill="none" stroke="#1e2532" stroke-width="1.7"/><path d="M1054.5 93.4 L1051.9 96.4" stroke="#1e2532" stroke-width="1.8"/>
<path d="M1081.3 84.3 H1092.5 M1095.7 84.3 H1100.9 M1095.7 81.4 V87 M1081.3 91.1 H1086.4 M1086.4 88 V94.2 M1090 91.1 H1100.9 M1081.3 97.9 H1087.3 M1090.6 95 V100.6 M1090.6 97.9 H1100.9" fill="none" stroke="#1e2532" stroke-width="1.8"/>
<polygon points="1105.5,89.3 1111.1,89.3 1108.3,92.2" fill="#1e2532"/>
<path d="M259.5 146.2 V158.4 M264.6 146.2 V158.4 M255.9 149.6 H268.7 M255.9 154.6 H268.7" fill="none" stroke="#1f3347" stroke-width="1.5" stroke-linecap="round"/>
<path d="M541.0500000000001 156.6 V151.04999999999998 Q541.0500000000001 149.45 542.6500000000001 149.45 H542.71 Q544.3100000000001 149.45 544.3100000000001 151.04999999999998 V156.6" fill="none" stroke="#3c4358" stroke-width="1.7"/><rect x="540.2" y="152.76" width="4.96" height="1.53" fill="#3c4358"/><path d="M547.0500000000001 155.75 V149.45 H548.96 Q550.3100000000001 149.45 550.3100000000001 150.79999999999998 V150.94 Q550.3100000000001 152.44 548.96 152.44 H547.0500000000001 M548.96 152.44 Q550.3100000000001 152.44 550.3100000000001 154.24 V154.4 Q550.3100000000001 155.75 548.96 155.75 H547.0500000000001" fill="none" stroke="#3c4358" stroke-width="1.7"/><path d="M557.1600000000001 149.45 H554.2 Q553.0500000000001 149.45 553.0500000000001 150.6 V154.6 Q553.0500000000001 155.75 554.2 155.75 H557.1600000000001" fill="none" stroke="#3c4358" stroke-width="1.7"/>
<path d="M1168.4 182.3 V175.5 Q1168.4 173.9 1170.0 173.9 H1170.6280000000002 Q1172.228 173.9 1172.228 175.5 V182.3" fill="none" stroke="#202124" stroke-width="2.0"/><rect x="1167.4" y="177.788" width="5.828" height="1.8" fill="#202124"/><path d="M1175.45 181.3 V173.9 H1178.078 Q1179.278 173.9 1179.278 175.1 V175.912 Q1179.278 177.412 1178.078 177.412 H1175.45 M1178.078 177.412 Q1179.278 177.412 1179.278 179.21200000000002 V180.10000000000002 Q1179.278 181.3 1178.078 181.3 H1175.45" fill="none" stroke="#202124" stroke-width="2.0"/><path d="M1187.328 173.9 H1183.5 Q1182.5 173.9 1182.5 174.9 V180.3 Q1182.5 181.3 1183.5 181.3 H1187.328" fill="none" stroke="#202124" stroke-width="2.0"/>
<path d="M816.3 147 H813.8 V158 H816.3 M824 147 H826.5 V158 H824" fill="none" stroke="#3c4358" stroke-width="1.5"/>
<!-- footer eye -->
<path d="M91 826.3 C94 821 97 820.3 100 820.3 C103 820.3 106 821 109 826.3 C106 831.5 103 832.2 100 832.2 C97 832.2 94 831.5 91 826.3 Z" fill="#2f3544"/>
<circle cx="100" cy="826.3" r="3.8" fill="#f1f4f9"/>
<circle cx="100" cy="826.3" r="2.1" fill="#2f3544"/>
<!-- panel header icons -->
<polyline points="1170.5,85.5 1165.5,90.3 1170.5,95" fill="none" stroke="#0a5bdb" stroke-width="1.8"/>
<g stroke="#0a5bdb" stroke-width="1.9"><path d="M1562.5 86 L1573.3 96.4"/><path d="M1573.3 86 L1562.5 96.4"/></g>
<!-- panel column input icons -->
<g stroke="#0a50d8" stroke-width="1.65"><path d="M1537.2 172.7 L1547.5 182.8"/><path d="M1547.5 172.7 L1537.2 182.8"/></g>
<polyline points="1558,175.5 1562.7,180.5 1567.4,175.5" fill="none" stroke="#3c4043" stroke-width="1.5"/>
<path d="M0 837 Q0.8 843 2.6 846 H0 Z" fill="#000"/>
<path d="M1600 839 Q1599.2 844 1597.6 846 H1600 Z" fill="#000"/>
</svg>
</body></html>
